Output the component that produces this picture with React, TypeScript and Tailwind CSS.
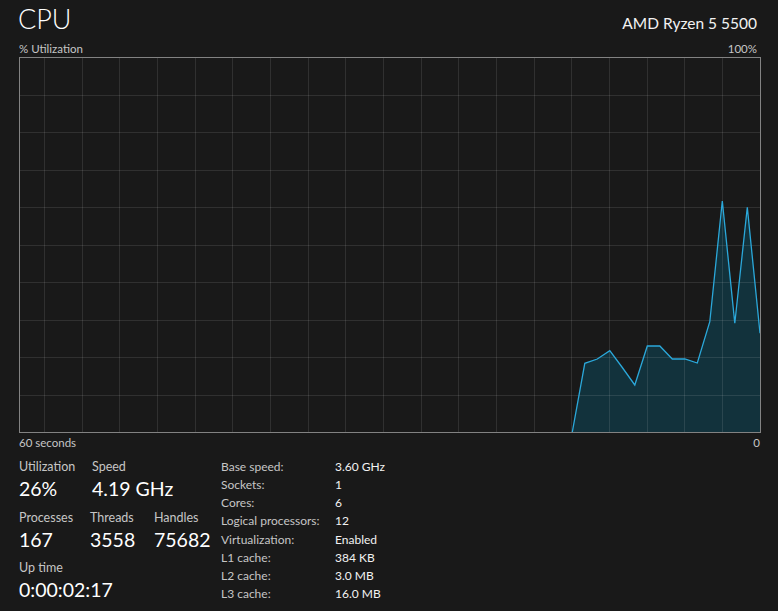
import React from "react";

const pts: [number, number][] = [
  [553.3, 375],
  [565.8, 306.3],
  [578.3, 302],
  [590.8, 293.7],
  [603.3, 310.5],
  [615.8, 328],
  [628.3, 289],
  [640.8, 289],
  [653.3, 302],
  [665.8, 302],
  [678.3, 306],
  [690.8, 264.7],
  [703.3, 144],
  [715.8, 266.3],
  [728.3, 150.3],
  [741, 276.3],
];

function Chart() {
  const W = 740;
  const H = 374;
  const line = pts.map(([x, y]) => `${x - 1},${y - 1}`).join(" ");
  const area = `${line} ${W},${H} ${pts[0][0] - 1},${H}`;
  const vx = Array.from({ length: 19 }, (_, i) => 24 + i * 37.67);
  const hy = Array.from({ length: 9 }, (_, i) => (i + 1) * 37.5 - 1);
  return (
    <div className="border border-[#828282] w-[742px] h-[376px]">
      <svg width={W} height={H} className="block">
        <polygon points={area} fill="#12323c" />
        {vx.map((x) => (
          <line key={"v" + x} x1={Math.round(x) + 0.5} x2={Math.round(x) + 0.5} y1={0} y2={H} stroke="rgba(255,255,255,0.1)" strokeWidth={1} />
        ))}
        {hy.map((y) => (
          <line key={"h" + y} x1={0} x2={W} y1={Math.round(y) + 0.5} y2={Math.round(y) + 0.5} stroke="rgba(255,255,255,0.1)" strokeWidth={1} />
        ))}
        <polyline points={line} fill="none" stroke="#2ba8da" strokeWidth={1.3} strokeLinejoin="miter" />
      </svg>
    </div>
  );
}

const specs: [string, string][] = [
  ["Base speed:", "3.60 GHz"],
  ["Sockets:", "1"],
  ["Cores:", "6"],
  ["Logical processors:", "12"],
  ["Virtualization:", "Enabled"],
  ["L1 cache:", "384 KB"],
  ["L2 cache:", "3.0 MB"],
  ["L3 cache:", "16.0 MB"],
];

function Stat({ label, value, w }: { label: string; value: string; w?: string }) {
  return (
    <div className={w}>
      <div className="text-[12.5px] leading-[18px] text-[#c6c6c6]">{label}</div>
      <div className="text-[19.5px] leading-[26px] text-white">{value}</div>
    </div>
  );
}

export default function App() {
  return (
    <div className="w-[778px] h-[611px] bg-[#191919] text-white font-['Lato',sans-serif] pl-[19px] pr-[17px] overflow-hidden">
      {/* Header */}
      <div className="flex items-end justify-between h-[36px] pr-[4px]">
        <div className="text-[27px] leading-[34px] font-light -ml-[1px]">CPU</div>
        <div className="text-[15.5px] leading-[22px] mb-[2px] text-[#f2f2f2]">AMD Ryzen 5 5500</div>
      </div>
      <div className="flex justify-between items-end text-[11.5px] leading-[16px] text-[#c6c6c6] pr-[4px] h-[21px]">
        <span>% Utilization</span>
        <span>100%</span>
      </div>
      <Chart />
      <div className="flex justify-between text-[11.5px] leading-[18px] text-[#c6c6c6] pr-[1px] mt-[1px]">
        <span>60 seconds</span>
        <span>0</span>
      </div>

      {/* Stats */}
      <div className="flex mt-[6px]">
        <div className="w-[202px]">
          <div className="flex">
            <Stat label="Utilization" value="26%" w="w-[73px]" />
            <Stat label="Speed" value="4.19 GHz" />
          </div>
          <div className="flex mt-[7px]">
            <Stat label="Processes" value="167" w="w-[71px]" />
            <Stat label="Threads" value="3558" w="w-[64px]" />
            <Stat label="Handles" value="75682" />
          </div>
          <div className="mt-[6px]">
            <Stat label="Up time" value="0:00:02:17" />
          </div>
        </div>
        <div className="grid grid-cols-[114px_auto] text-[12px] leading-[18px]">
          {specs.map(([k, v]) => (
            <React.Fragment key={k}>
              <span className="text-[#c6c6c6]">{k}</span>
              <span className="text-[#f2f2f2]">{v}</span>
            </React.Fragment>
          ))}
        </div>
      </div>
    </div>
  );
}
